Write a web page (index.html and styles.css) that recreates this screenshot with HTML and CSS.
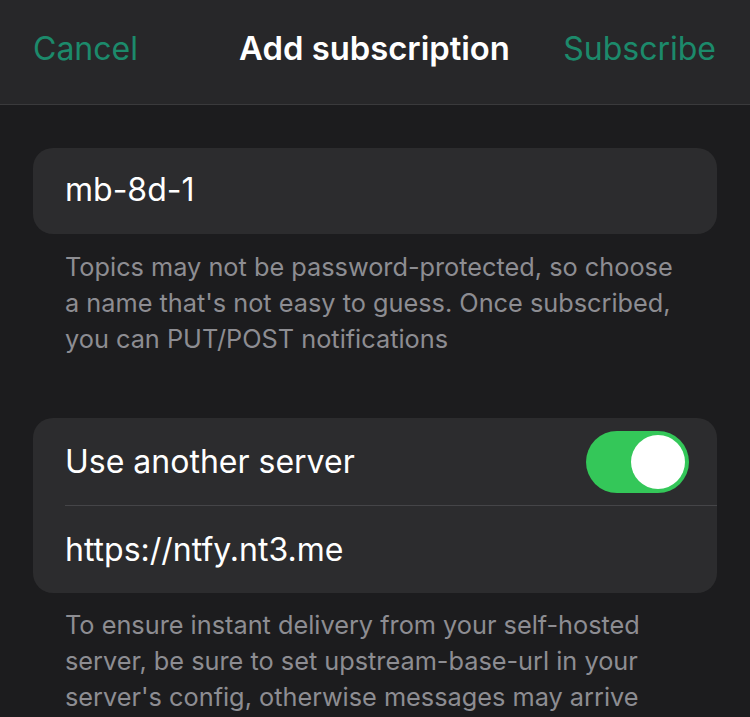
FILE: index.html
```html
<!DOCTYPE html>
<html>
<head>
<meta charset="utf-8">
<link rel="stylesheet" href="styles.css">
</head>
<body>
<div class="sheet">
  <header class="nav">
    <span class="nav-btn nav-left">Cancel</span>
    <span class="nav-title">Add subscription</span>
    <span class="nav-btn nav-right">Subscribe</span>
  </header>
  <main class="content">
    <section class="card">
      <div class="row topic">mb-8d-1</div>
    </section>
    <p class="footer topic-note">Topics may not be password-protected, so choose a name that's not easy to guess. Once subscribed, you can PUT/POST notifications</p>
    <section class="card card-server">
      <div class="row">
        <span class="label">Use another server</span>
        <span class="toggle"><span class="knob"></span></span>
      </div>
      <div class="divider"></div>
      <div class="row">
        <span class="label">https://ntfy.nt3.me</span>
      </div>
    </section>
    <p class="footer server-note">To ensure instant delivery from your self-hosted server, be sure to set upstream-base-url in your server's config, otherwise messages may arrive</p>
  </main>
</div>
</body>
</html>
```
FILE: styles.css
```css
html, body {
  margin: 0;
  padding: 0;
  background: #1c1c1e;
  height: 100%;
  overflow: hidden;
}
body {
  font-family: "Inter", "Liberation Sans", sans-serif;
  color: #ffffff;
}
.sheet {
  width: 750px;
}
.nav {
  height: 105px;
  background: #272729;
  border-bottom: 1px solid #3a3a3c;
  display: grid;
  grid-template-columns: 1fr auto 1fr;
  align-items: center;
  padding: 0 34px 8px 33px;
  box-sizing: border-box;
}
.nav-btn {
  font-size: 32px;
  color: #1c8a6b;
}
.nav-right {
  justify-self: end;
}
.nav-title {
  font-size: 32.8px;
  font-weight: 600;
  color: #ffffff;
}
.content {
  padding: 43px 33px 0 33px;
}
.card {
  background: #2c2c2e;
  border-radius: 20px;
  overflow: hidden;
}
.row {
  height: 87px;
  display: flex;
  align-items: center;
  justify-content: space-between;
  padding: 0 28px 0 32px;
}
.topic {
  height: 86px;
  font-size: 32px;
  padding-bottom: 3px;
  box-sizing: border-box;
}
.label {
  font-size: 32px;
}
.divider {
  height: 1px;
  background: #454548;
  margin-left: 32px;
}
.footer {
  margin: 15px 0 0 0;
  padding: 0 32px;
  font-size: 25.3px;
  line-height: 36px;
  color: #8d8d92;
}
.topic-note {
  margin-bottom: 61px;
}
.server-note {
  margin-top: 14px;
}
.toggle {
  width: 103px;
  height: 62px;
  border-radius: 31px;
  background: #34c759;
  display: flex;
  align-items: center;
  justify-content: flex-end;
  padding: 0 4px;
  box-sizing: border-box;
}
.knob {
  width: 54px;
  height: 54px;
  border-radius: 50%;
  background: #ffffff;
}
```
